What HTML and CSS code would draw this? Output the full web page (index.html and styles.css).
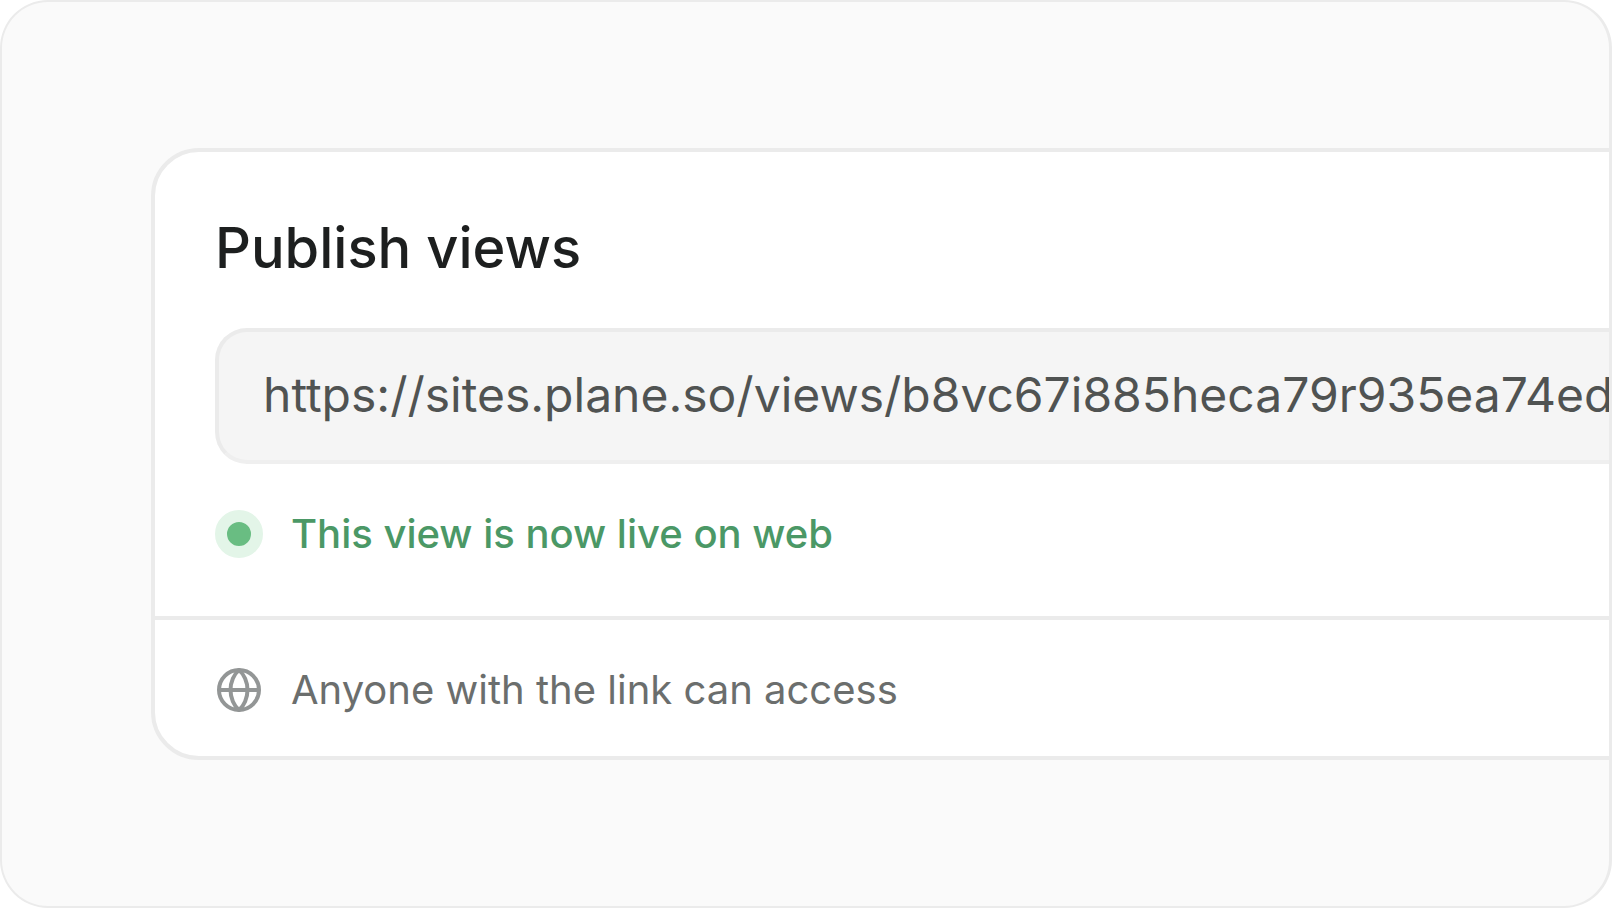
FILE: index.html
```
<!DOCTYPE html>
<html lang="en">
<head>
    <meta charset="UTF-8">
    <meta name="viewport" content="width=device-width, initial-scale=1.0">
    <title>Publish views</title>
    <link rel="stylesheet" href="styles.css">
</head>
<body>
    <main class="preview">
        <section class="publish-card">
            <div class="publish-main">
                <h1><label for="view-url">Publish views</label></h1>
                <input type="text" id="view-url" class="url-field" value="https://sites.plane.so/views/b8vc67i885heca79r935ea74ed" readonly>
                <p class="row live">
                    <span class="live-dot"></span>
                    This view is now live on web
                </p>
            </div>
            <footer class="publish-footer">
                <p class="row access">
                    <svg class="globe" viewBox="0 0 48 48" fill="none" stroke="currentColor" stroke-width="4" aria-hidden="true">
                        <circle cx="24" cy="24" r="20"/>
                        <path d="M4 24h40"/>
                        <path d="M24 4c-5 4-8.500 12-8.500 20s3.500 16 8.500 20c5-4 8.500-12 8.500-20s-3.500-16-8.500-20z" stroke-linejoin="round"/>
                    </svg>
                    Anyone with the link can access
                </p>
            </footer>
        </section>
    </main>
</body>
</html>
```
FILE: styles.css
```
* {
    box-sizing: border-box;
}

body {
    margin: 0;
    font-family: Inter, "Liberation Sans", sans-serif;
    background-color: #fff;
}

.preview {
    min-height: 100vh;
    padding: 146px 0 146px 149px;
    border: 2px solid #ebebeb;
    border-right-width: 3px;
    border-radius: 48px;
    background-color: #fafafa;
    overflow: hidden;
}

/* the card runs off the right side of the preview */
.publish-card {
    margin-right: -160px;
    border: 4px solid #ebebeb;
    border-radius: 48px;
    background-color: #fff;
}

.publish-main {
    padding: 64px 60px 58px;
}

h1 {
    margin: 0 0 48px;
    font-size: 56px;
    font-weight: 500;
    line-height: 64px;
    color: #1d1f1f;
}

.url-field {
    display: block;
    width: 100%;
    height: 136px;
    margin-bottom: 46px;
    padding: 0 44px 4px;
    border: 4px solid #ebebeb;
    border-bottom-color: #efefef;
    border-radius: 32px;
    background-color: #f5f5f5;
    font-family: inherit;
    font-size: 48px;
    color: #505352;
    outline: none;
}

.row {
    display: flex;
    align-items: center;
    gap: 28px;
    margin: 0;
    font-size: 40px;
    line-height: 48px;
}

.live {
    font-weight: 500;
    color: #4b9866;
}

.live-dot {
    width: 48px;
    height: 48px;
    border: 12px solid #e3f5e8;
    border-radius: 50%;
    background-color: #69bd82;
}

.publish-footer {
    padding: 46px 60px 42px;
    border-top: 4px solid #ebebeb;
}

.access {
    color: #6b6e6d;
}

.globe {
    width: 48px;
    height: 48px;
    color: #939696;
}
```
